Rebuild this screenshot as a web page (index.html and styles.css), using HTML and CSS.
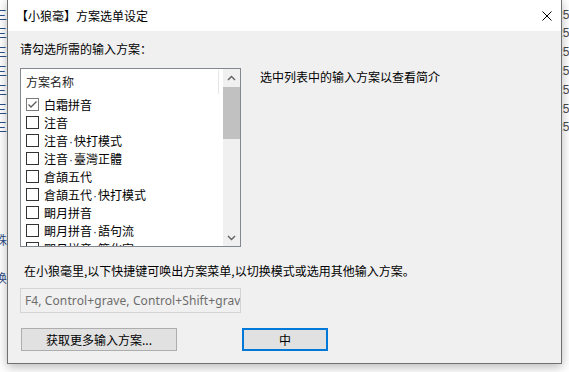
FILE: index.html
```html
<!DOCTYPE html>
<html lang="zh-CN">
<head>
<meta charset="utf-8">
<title>方案选单设定</title>
<link rel="stylesheet" href="styles.css">
</head>
<body>
<div class="bg-left">
  <div>三</div><div>三</div><div>三</div><div>三</div><div>三</div><div>三</div><div>三</div>
  <div>&nbsp;</div><div>&nbsp;</div><div>&nbsp;</div><div>&nbsp;</div><div>&nbsp;</div>
  <div>殊</div><div>&nbsp;</div><div>换</div>
</div>
<div class="bg-right">
  <div>25</div><div>25</div><div>25</div><div>25</div><div>25</div><div>25</div><div>25</div>
</div>

<div class="dialog">
  <div class="titlebar">
    <span class="title">【小狼毫】方案选单设定</span>
    <span class="close">
      <svg width="10" height="10" viewBox="0 0 10 10"><path d="M0.5 0.5 L9.5 9.5 M9.5 0.5 L0.5 9.5" stroke="#000" stroke-width="1" fill="none"/></svg>
    </span>
  </div>
  <div class="body">
    <div class="prompt">请勾选所需的输入方案：</div>
    <div class="main">
      <div class="listbox">
        <div class="list">
          <div class="header"><div class="hcell">方案名称</div></div>
          <div class="row"><span class="cb checked"><svg width="11" height="11" viewBox="0 0 11 11"><path d="M1.5 5.5 L4 8 L9.5 2.5" stroke="#5a5a5a" stroke-width="1.3" fill="none"/></svg></span><span>白霜拼音</span></div>
          <div class="row"><span class="cb"></span><span>注音</span></div>
          <div class="row"><span class="cb"></span><span>注音<span class="dot">·</span>快打模式</span></div>
          <div class="row"><span class="cb"></span><span>注音<span class="dot">·</span>臺灣正體</span></div>
          <div class="row"><span class="cb"></span><span>倉頡五代</span></div>
          <div class="row"><span class="cb"></span><span>倉頡五代<span class="dot">·</span>快打模式</span></div>
          <div class="row"><span class="cb"></span><span>朙月拼音</span></div>
          <div class="row"><span class="cb"></span><span>朙月拼音<span class="dot">·</span>語句流</span></div>
          <div class="row"><span class="cb"></span><span>朙月拼音<span class="dot">·</span>簡化字</span></div>
        </div>
        <div class="scrollbar">
          <div class="sb-btn up"><svg width="9" height="6" viewBox="0 0 9 6"><path d="M1 5 L4.5 1.5 L8 5" stroke="#606060" stroke-width="1.4" fill="none"/></svg></div>
          <div class="sb-thumb"></div>
          <div class="sb-track"></div>
          <div class="sb-btn down"><svg width="9" height="6" viewBox="0 0 9 6"><path d="M1 1 L4.5 4.5 L8 1" stroke="#606060" stroke-width="1.4" fill="none"/></svg></div>
        </div>
      </div>
      <div class="desc">选中列表中的输入方案以查看简介</div>
    </div>
    <div class="hint">在小狼毫里,以下快捷键可唤出方案菜单,以切换模式或选用其他输入方案。</div>
    <div class="field">F4, Control+grave, Control+Shift+grave</div>
    <div class="buttons">
      <div class="btn more">获取更多输入方案...</div>
      <div class="btn default">中</div>
    </div>
  </div>
</div>
</body>
</html>
```

FILE: styles.css
```css
html, body {
  margin: 0;
  padding: 0;
}
body {
  width: 569px;
  height: 372px;
  overflow: hidden;
  position: relative;
  background: #ffffff;
  font-family: "Noto Sans CJK SC", sans-serif;
  font-size: 12px;
  color: #000;
}

.bg-left {
  position: absolute;
  left: -5px;
  top: 5.6px;
  line-height: 18.8px;
  color: #2f4f86;
  font-size: 12px;
}
.bg-right {
  position: absolute;
  left: 556px;
  top: 5.6px;
  line-height: 18.8px;
  color: #4a4a4a;
  font-family: "Liberation Sans", sans-serif;
  font-size: 12px;
}

.dialog {
  position: absolute;
  left: 7px;
  top: -1px;
  width: 555px;
  height: 365px;
  box-sizing: border-box;
  border: 1px solid #707070;
  background: #f0f0f0;
  box-shadow: 0 3px 10px rgba(0, 0, 0, 0.28);
  display: flex;
  flex-direction: column;
}

.titlebar {
  height: 31px;
  flex: none;
  background: #ffffff;
  display: flex;
  align-items: center;
  justify-content: space-between;
  padding-left: 8px;
}
.title {
  line-height: 16px;
}
.close {
  width: 28px;
  height: 31px;
  display: flex;
  align-items: center;
  justify-content: center;
}

.body {
  padding: 10px 0 0 12px;
}
.prompt {
  line-height: 16px;
}
.main {
  display: flex;
  align-items: flex-start;
  margin-top: 11px;
}
.listbox {
  width: 221px;
  height: 179px;
  box-sizing: border-box;
  border: 1px solid #828790;
  background: #fff;
  display: flex;
  overflow: hidden;
}
.list {
  flex: 1;
  overflow: hidden;
}
.header {
  height: 26px;
}
.hcell {
  width: 198px;
  height: 24px;
  margin-top: 1px;
  box-sizing: border-box;
  border-right: 1px solid #e5e5e5;
  padding: 4px 0 0 5px;
  line-height: 16px;
  color: #1e1e1e;
}
.row {
  height: 18px;
  display: flex;
  align-items: flex-start;
  padding-left: 5px;
  white-space: nowrap;
  line-height: 18px;
}
.dot {
  font-family: "Liberation Sans", sans-serif;
  padding: 0 1px;
  color: #1a2a50;
}
.cb {
  width: 13px;
  height: 13px;
  margin-top: 2px;
  margin-right: 5px;
  box-sizing: border-box;
  border: 1px solid #333333;
  background: #fff;
  flex: none;
  display: flex;
}
.cb.checked {
  border-color: #7a7a7a;
}

.scrollbar {
  width: 17px;
  flex: none;
  background: #f0f0f0;
  display: flex;
  flex-direction: column;
}
.sb-btn {
  display: flex;
  justify-content: center;
}
.sb-btn.up {
  height: 18px;
  align-items: flex-end;
  padding-bottom: 6px;
  box-sizing: border-box;
}
.sb-btn.down {
  height: 17px;
  align-items: flex-start;
  padding-top: 6px;
  box-sizing: border-box;
}
.sb-thumb {
  height: 52px;
  background: #c1c1c1;
}
.sb-track {
  flex: 1;
}

.desc {
  margin: 1px 0 0 19px;
  line-height: 16px;
}
.hint {
  margin: 16px 0 0 4px;
  line-height: 16px;
}
.field {
  margin-top: 9px;
  width: 221px;
  height: 25px;
  box-sizing: border-box;
  border: 1px solid #d4d4d4;
  padding: 0 2px 0 4px;
  line-height: 23px;
  color: #6d6d6d;
  font-family: "Noto Sans", sans-serif;
  font-size: 12px;
  letter-spacing: 0.1px;
  white-space: nowrap;
  overflow: hidden;
}
.buttons {
  display: flex;
  margin-top: 15px;
}
.btn {
  height: 23px;
  box-sizing: border-box;
  border: 1px solid #adadad;
  background: #e1e1e1;
  display: flex;
  align-items: center;
  justify-content: center;
  line-height: 16px;
}
.btn.more {
  width: 156px;
  margin-left: 1px;
}
.btn.default {
  width: 86px;
  margin-left: 65px;
  border: 2px solid #0078d7;
}
```
